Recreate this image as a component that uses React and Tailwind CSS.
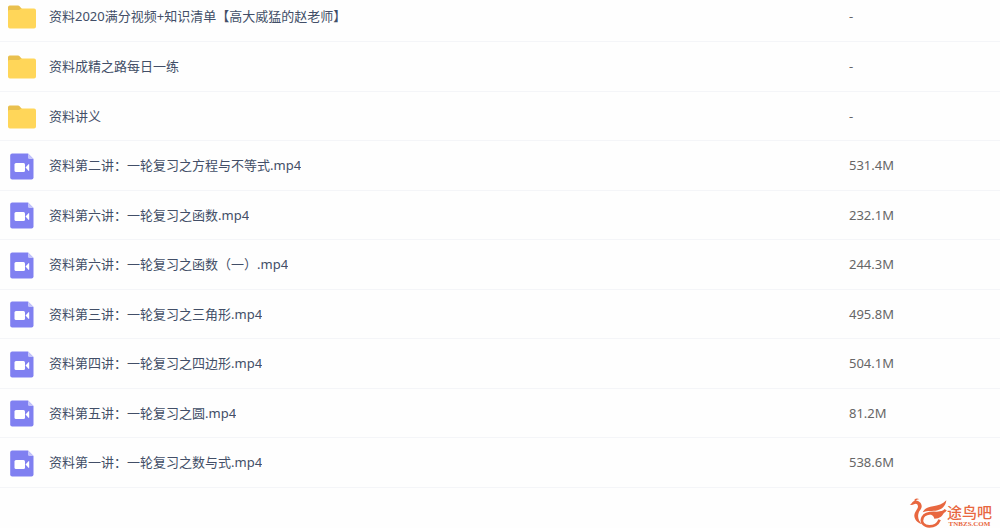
const files = [
    { name: "资料2020满分视频+知识清单【高大威猛的赵老师】", type: "folder", size: "-" },
    { name: "资料成精之路每日一练", type: "folder", size: "-" },
    { name: "资料讲义", type: "folder", size: "-" },
    { name: "资料第二讲：一轮复习之方程与不等式.mp4", type: "video", size: "531.4M" },
    { name: "资料第六讲：一轮复习之函数.mp4", type: "video", size: "232.1M" },
    { name: "资料第六讲：一轮复习之函数（一）.mp4", type: "video", size: "244.3M" },
    { name: "资料第三讲：一轮复习之三角形.mp4", type: "video", size: "495.8M" },
    { name: "资料第四讲：一轮复习之四边形.mp4", type: "video", size: "504.1M" },
    { name: "资料第五讲：一轮复习之圆.mp4", type: "video", size: "81.2M" },
    { name: "资料第一讲：一轮复习之数与式.mp4", type: "video", size: "538.6M" },
];

const App = () => {
    return (
        <div className="overflow-hidden bg-[#fefefe] font-['Noto_Sans','Noto_Sans_CJK_SC',sans-serif]">
            <FileList />
            <footer className="flex justify-end pt-[10px] pr-2">
                <SiteLogo />
            </footer>
        </div>
    );
};

const FileList = () => {
    return (
        <table className="-mt-2 w-full table-fixed border-collapse text-[13px] leading-5">
            <tbody>
                {files.map((file) => (
                    <FileRow key={file.name} file={file} />
                ))}
            </tbody>
        </table>
    );
};

const FileRow = ({ file }) => {
    return (
        <tr className="border-b border-[#f4f5f8] odd:h-[49px] even:h-[50px]">
            <td className="p-0 pl-2">
                <div className="flex items-center gap-[13px]">
                    <span className="flex w-7 shrink-0 justify-center pt-[2px]">
                        {file.type === "folder" ? <FolderIcon /> : <VideoIcon />}
                    </span>
                    <span className="truncate text-[#424e67]">{file.name}</span>
                </div>
            </td>
            <td className="w-[151px] p-0 text-[#666666]">{file.size}</td>
        </tr>
    );
};

const FolderIcon = () => {
    return (
        <svg width="28" height="24" viewBox="0 0 28 24" aria-hidden="true">
            <path d="M0 2.2Q0 .5 1.7.5H10q1 0 1.6.8L14 4v5H0z" fill="#e9c04e" />
            <path d="M0 6.2Q0 5 1.2 5H11l2.2-1.6H26q2 0 2 2V21.500q0 2-2 2H2q-2 0-2-2z" fill="#ffd659" />
        </svg>
    );
};

const VideoIcon = () => {
    return (
        <svg width="24" height="27" viewBox="0 0 24 27" aria-hidden="true">
            <path d="M2.200 .5H18l5.500 5.500V24.500q0 2-2 2H2.200q-2 0-2-2v-22q0-2 2-2z" fill="#8080f1" />
            <path d="M18 .5l5.500 5.500H19.500q-1.500 0-1.500-1.500z" fill="#c5c5fa" />
            <rect x="4.500" y="10" width="10.500" height="9" rx="1.500" fill="#fff" />
            <path d="M15.500 14.500l3-3.200q.7-.5.700.4v5.600q0 .9-.7.400z" fill="#fff" />
        </svg>
    );
};

const SiteLogo = () => {
    return (
        <div className="flex items-end text-[#e8673f]">
            <svg width="38" height="30" viewBox="12 14 114 90" fill="currentColor" aria-hidden="true">
                <path d="M14 33C20 33 21 25 28 23C38 20 49 27 50 37C51 46 44 50 41 58C37 70 40 84 52 93C37 90 27 77 28 65C29 54 39 48 39 39C38 31 32 30 27 33C23 35 18 36 14 33Z" />
                <path d="M28 22C28 15 37 13 43 18C37 17 35 20 33 23Z" />
                <path d="M53 57C59 44 70 41 84 39C99 37 113 32 124 21C122 37 113 47 98 51C82 55 67 51 53 57Z" />
                <path
                    d="M122 49C115 59 104 59 94 59C78 58 60 60 53 72C46 87 57 99 73 99C88 99 99 91 104 79"
                    fill="none"
                    stroke="currentColor"
                    strokeWidth="8"
                />
                <path d="M67 61C78 62 86 66 88 76C104 76 115 67 119 52L98 56Z" />
            </svg>
            <div className="flex flex-col items-center">
                <span className="text-[15px] leading-4 font-medium">途鸟吧</span>
                <span className="font-['Liberation_Serif',serif] text-[7px] leading-2 font-bold">
                    TNBZS.COM
                </span>
            </div>
        </div>
    );
};

export default App;
